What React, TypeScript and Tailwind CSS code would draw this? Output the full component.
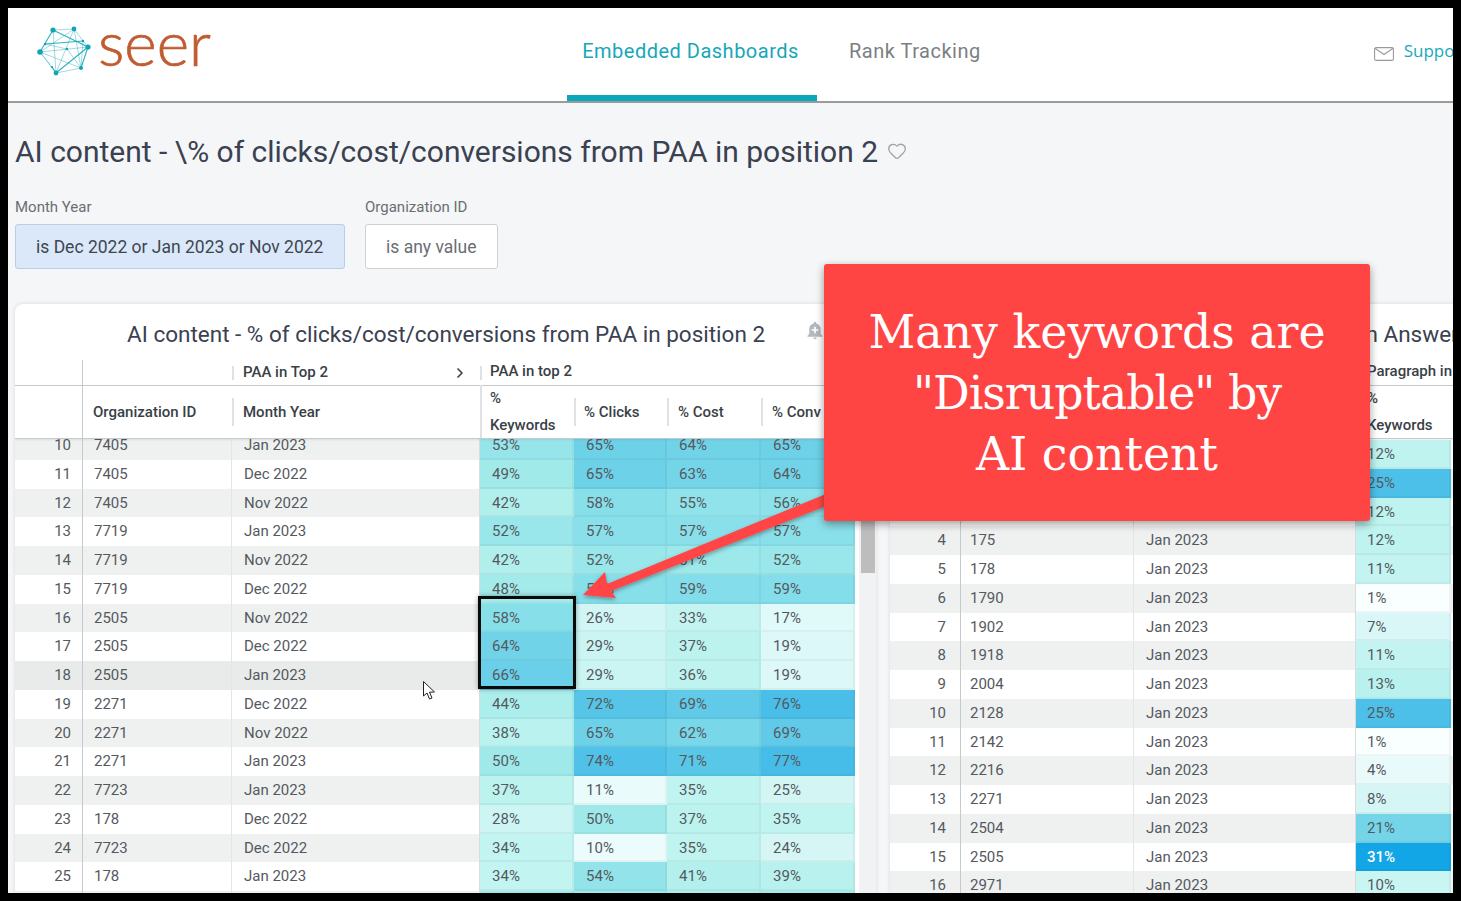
import React from 'react';
import { Heart, ChevronRight } from 'lucide-react';
import { MdAddAlert } from 'react-icons/md';

const stops: [number, number[]][] = [
  [0, [255, 255, 255]],
  [10, [236, 251, 252]],
  [25, [211, 246, 245]],
  [37, [188, 243, 239]],
  [50, [159, 233, 234]],
  [58, [135, 223, 234]],
  [65, [109, 209, 232]],
  [76, [73, 190, 232]],
  [93, [19, 166, 230]],
];

function heat(v: number) {
  for (let i = 1; i < stops.length; i++) {
    if (v <= stops[i][0]) {
      const [a, ca] = stops[i - 1];
      const [b, cb] = stops[i];
      const t = (v - a) / (b - a);
      const c = ca.map((x, j) => Math.round(x + (cb[j] - x) * t));
      return `rgb(${c[0]},${c[1]},${c[2]})`;
    }
  }
  return 'rgb(19,166,230)';
}

const leftRows: [number, string, string, number, number, number, number][] = [
  [10, '7405', 'Jan 2023', 53, 65, 64, 65],
  [11, '7405', 'Dec 2022', 49, 65, 63, 64],
  [12, '7405', 'Nov 2022', 42, 58, 55, 56],
  [13, '7719', 'Jan 2023', 52, 57, 57, 57],
  [14, '7719', 'Nov 2022', 42, 52, 51, 52],
  [15, '7719', 'Dec 2022', 48, 58, 59, 59],
  [16, '2505', 'Nov 2022', 58, 26, 33, 17],
  [17, '2505', 'Dec 2022', 64, 29, 37, 19],
  [18, '2505', 'Jan 2023', 66, 29, 36, 19],
  [19, '2271', 'Dec 2022', 44, 72, 69, 76],
  [20, '2271', 'Nov 2022', 38, 65, 62, 69],
  [21, '2271', 'Jan 2023', 50, 74, 71, 77],
  [22, '7723', 'Jan 2023', 37, 11, 35, 25],
  [23, '178', 'Dec 2022', 28, 50, 37, 35],
  [24, '7723', 'Dec 2022', 34, 10, 35, 24],
  [25, '178', 'Jan 2023', 34, 54, 41, 39],
  [26, '2504', 'Jan 2023', 50, 50, 45, 48],
];

const rightRows: [number, string, number][] = [
  [1, '12', 12],
  [2, '46', 25],
  [3, '152', 12],
  [4, '175', 12],
  [5, '178', 11],
  [6, '1790', 1],
  [7, '1902', 7],
  [8, '1918', 11],
  [9, '2004', 13],
  [10, '2128', 25],
  [11, '2142', 1],
  [12, '2216', 4],
  [13, '2271', 8],
  [14, '2504', 21],
  [15, '2505', 31],
  [16, '2971', 10],
];

function Logo() {
  const nodes: [number, number, number][] = [
    [53, 30, 2.6], [74, 29, 2.4], [88, 47, 2.6], [81, 68, 2], [56, 73, 2.4], [40, 52, 2.8],
    [45, 44, 1.2], [83, 41, 1.2], [52, 67, 1.1], [67, 49, 1.2],
  ];
  const lines = [
    [0, 1], [1, 2], [2, 3], [3, 4], [4, 5], [5, 0], [5, 1], [5, 2], [0, 2], [1, 4], [0, 4], [2, 4],
    [5, 3], [1, 3], [6, 7], [6, 9], [7, 3], [8, 4], [8, 5], [9, 3],
  ];
  return (
    <svg width="100" height="90" viewBox="0 0 100 90" className="shrink-0">
      {lines.map(([a, b], i) => (
        <line
          key={i}
          x1={nodes[a][0]}
          y1={nodes[a][1]}
          x2={nodes[b][0]}
          y2={nodes[b][1]}
          stroke="#1aa9b8"
          strokeWidth={i % 3 === 2 ? 1.1 : 0.7}
          opacity={i % 3 === 2 ? 0.9 : 0.6}
        />
      ))}
      {nodes.map(([x, y, r], i) => (
        <circle key={i} cx={x} cy={y} r={r} fill="#12a5b2" />
      ))}
    </svg>
  );
}

function Header() {
  return (
    <div className="flex h-[95px] shrink-0 bg-white border-b-2 border-[#9b9b9b] whitespace-nowrap">
      <div className="w-[559px] shrink-0 flex items-start h-[93px]">
        <div className="-ml-[8px] -mt-[8px]">
          <Logo />
        </div>
        <span className="font-['Lato'] font-light text-[62px] leading-none text-[#c05c31] [-webkit-text-stroke:0.7px_#c05c31] -ml-[2px] mt-[3px]">seer</span>
      </div>
      <div className="w-[250px] shrink-0 h-[93px] border-b-[6px] border-[#0ba8b9] flex justify-center pt-[31px] pr-[3px] text-[20px] leading-6 tracking-[0.5px] text-[#17a7b6]">
        Embedded Dashboards
      </div>
      <div className="pl-[32px] shrink-0 pt-[31px] text-[20px] leading-6 tracking-[0.5px] text-[#7b7f83]">Rank Tracking</div>
      <div className="ml-[393px] shrink-0 pt-[33px] flex items-start">
        <svg width="20" height="14" viewBox="0 0 20 14" className="mt-[6px] shrink-0" fill="none" stroke="#9a9a9a" strokeWidth="1.1">
          <rect x="0.6" y="0.6" width="18.8" height="12.8" rx="1.5" />
          <path d="M1 1.2 L10 7.5 L19 1.2" />
        </svg>
        <span className="ml-[10px] text-[17px] leading-5 text-[#19a9bb] font-['Open_Sans']">Support</span>
      </div>
    </div>
  );
}

function Filter({ label, value, active }: { label: string; value: string; active?: boolean }) {
  return (
    <div className="flex flex-col">
      <div className="text-[15px] leading-5 text-[#6a6e73] mb-[7px]">{label}</div>
      <div
        className={`h-[45px] flex items-center pt-[2px] pl-[20px] rounded-[3px] border text-[17.5px] ${
          active ? 'w-[330px] bg-[#dae8f9] border-[#b8cde8] text-[#3f4650]' : 'w-[133px] bg-white border-[#cdd1d5] text-[#6a6e73]'
        }`}
      >
        {value}
      </div>
    </div>
  );
}

function HeatCell({ v, w }: { v: number; w: string }) {
  return (
    <div className={`${w} h-full shrink-0 pl-[12px] pt-[2px] flex items-center border-r-2 border-b-2 border-black/[0.04]`} style={{ background: heat(v) }}>
      {v}%
    </div>
  );
}

function LeftTable() {
  return (
    <div className="w-[861px] shrink-0 bg-white rounded-t-lg shadow-[0_0_4px_rgba(0,0,0,0.12)] overflow-hidden flex flex-col">
      <div className="h-[56px] shrink-0 flex items-start pt-[17px] pl-[112px] text-[22.5px] leading-[26px] text-[#3a4150] whitespace-nowrap">
        AI content - % of clicks/cost/conversions from PAA in position 2
        <MdAddAlert className="ml-[40px] -mt-[1px] text-[#b4b7bb]" size={20} />
      </div>
      <div className="flex w-[840px] h-[26px] text-[15px] font-medium text-[#3a3f47] border-b border-[#c6c9cd]">
        <div className="w-[68px] border-r border-[#c6c9cd]" />
        <div className="w-[149px]" />
        <div className="w-[248px] flex items-center pl-[11px] relative">
          <span className="absolute left-0 top-[6px] h-[14px] w-[2px] bg-[#dfe1e4]" />
          PAA in Top 2
          <ChevronRight className="ml-auto mr-[12px]" size={16} strokeWidth={2.5} />
        </div>
        <div className="flex-1 flex items-center pl-[10px] relative -mt-[2px]">
          <span className="absolute left-0 top-[8px] h-[14px] w-[2px] bg-[#dfe1e4]" />
          PAA in top 2
        </div>
      </div>
      <div className="flex w-[840px] h-[53px] text-[15px] font-medium text-[#3a3f47] border-b border-[#c6c9cd] shadow-[0_1px_2px_rgba(0,0,0,0.08)] relative">
        <div className="w-[68px] border-r border-[#c6c9cd]" />
        <div className="w-[149px] pl-[10px] flex items-center">Organization ID</div>
        <div className="w-[248px] pl-[9px] flex items-center border-l-2 border-[#dfe1e4] my-[12px]">Month Year</div>
        <div className="w-[94px] pl-[8px] flex flex-col leading-[27px] -mt-[1px] border-l-2 border-[#dfe1e4]">
          <span>%</span>
          <span>Keywords</span>
        </div>
        <div className="w-[93px] pl-[8px] flex items-center border-l-2 border-[#dfe1e4] my-[12px]">% Clicks</div>
        <div className="w-[94px] pl-[9px] flex items-center border-l-2 border-[#dfe1e4] my-[12px]">% Cost</div>
        <div className="w-[94px] pl-[9px] flex items-center border-l-2 border-[#dfe1e4] my-[12px]">% Conv</div>
      </div>
      <div className="flex-1 overflow-hidden flex">
        <div className="w-[840px] shrink-0 -mt-[8px] text-[15px] text-[#55595e]">
          {leftRows.map((r) => (
            <div
              key={r[0]}
              className={`flex h-[28.75px] items-center ${r[0] === 18 ? 'bg-[#e9ebeb]' : r[0] % 2 === 0 ? 'bg-[#eff1f1]' : 'bg-white'}`}
            >
              <div className="w-[68px] h-full flex items-center justify-end pr-[11px] border-r border-[#c6c9cd]">{r[0]}</div>
              <div className="w-[149px] h-full flex items-center pl-[11px] border-r border-[#e3e5e7]">{r[1]}</div>
              <div className="w-[248px] h-full flex items-center pl-[12px] border-r border-[#d9dbdd]">{r[2]}</div>
              <HeatCell v={r[3]} w="w-[94px]" />
              <HeatCell v={r[4]} w="w-[93px]" />
              <HeatCell v={r[5]} w="w-[94px]" />
              <HeatCell v={r[6]} w="w-[94px]" />
            </div>
          ))}
        </div>
        <div className="ml-[4px] w-[17px] bg-[#f1f2f3]">
          <div className="mt-[30px] h-[104px] w-[14px] mx-auto bg-[#bdbdbd]" />
        </div>
      </div>
    </div>
  );
}

function RightTable() {
  return (
    <div className="w-[700px] shrink-0 bg-white rounded-t-lg shadow-[0_0_4px_rgba(0,0,0,0.12)] overflow-hidden flex flex-col">
      <div className="h-[56px] shrink-0 pt-[17px] pl-[77px] text-[22.5px] leading-[26px] text-[#3a4150] whitespace-nowrap">
        AI content - % of clicks from Paragraph in Answer Box
      </div>
      <div className="flex h-[26px] text-[15px] font-medium text-[#3a3f47] border-b border-[#c6c9cd]">
        <div className="ml-[477px] flex items-center -mt-[2px] whitespace-nowrap">Paragraph in Answer Box</div>
      </div>
      <div className="flex h-[53px] text-[15px] font-medium text-[#3a3f47] border-b border-[#c6c9cd] shadow-[0_1px_2px_rgba(0,0,0,0.08)]">
        <div className="w-[71px]" />
        <div className="w-[173px] pl-[10px] flex items-center">Organization ID</div>
        <div className="w-[222px] pl-[11px] flex items-center">Month Year</div>
        <div className="w-[94px] pl-[11px] flex flex-col leading-[27px] -mt-[1px]">
          <span>%</span>
          <span>Keywords</span>
        </div>
      </div>
      <div className="flex-1 overflow-hidden pt-[1px] text-[15px] text-[#55595e]">
        {rightRows.map((r) => (
          <div key={r[0]} className={`flex h-[28.75px] items-center ${r[0] % 2 === 0 ? 'bg-[#eff1f1]' : 'bg-white'}`}>
            <div className="w-[71px] h-full flex items-center justify-end pr-[14px] border-r border-[#c6c9cd]">{r[0]}</div>
            <div className="w-[173px] h-full flex items-center pl-[9px] border-r border-[#e3e5e7]">{r[1]}</div>
            <div className="w-[222px] h-full flex items-center pl-[12px] border-r border-[#d9dbdd]">Jan 2023</div>
            <div
              className={`w-[95px] h-full flex items-center pl-[11px] pt-[2px] border-r-2 border-b-2 border-black/[0.04] ${r[2] > 30 ? 'text-white font-medium' : ''}`}
              style={{ background: heat(r[2] * 3) }}
            >
              {r[2]}%
            </div>
          </div>
        ))}
      </div>
    </div>
  );
}

function Overlays() {
  return (
    <>
      <div className="absolute left-[478px] top-[596px] w-[98px] h-[93px] border-[3px] border-[#0a0a0a] shadow-[0_0_5px_rgba(0,0,0,0.35)]" />
      <svg className="absolute left-[570px] top-[480px]" width="270" height="135" viewBox="570 480 270 135">
        <defs>
          <filter id="arrowShadow" x="-10%" y="-10%" width="120%" height="130%">
            <feDropShadow dx="0" dy="2" stdDeviation="2" floodColor="#000" floodOpacity="0.35" />
          </filter>
        </defs>
        <polygon
          points="583,595 605,572 607,584 826,494 826,506 611,591 616,598"
          fill="#ff4444"
          filter="url(#arrowShadow)"
        />
      </svg>
      <svg className="absolute left-[423px] top-[681px]" width="13" height="20" viewBox="0 0 13 20">
        <path d="M0.5 0.5 L0.5 15 L4 12 L6.5 18 L9 17 L6.5 11.2 L11.5 11 Z" fill="#fff" stroke="#222" strokeWidth="1" strokeLinejoin="round" />
      </svg>
      <div className="absolute left-[824px] top-[264px] w-[546px] h-[257px] pt-[2px] bg-[#ff4444] rounded-[3px] shadow-[0_3px_8px_rgba(0,0,0,0.4)] flex flex-col items-center justify-center font-['DejaVu_Serif'] text-white text-[45.8px] leading-[61px]">
        <div>Many keywords are</div>
        <div className="tracking-[-1px]">"Disruptable" by</div>
        <div>AI content</div>
      </div>
    </>
  );
}

export default function App() {
  return (
    <div className="relative w-[1461px] h-[901px] bg-black p-2 overflow-hidden font-['Roboto',sans-serif]">
      <div className="w-full h-full bg-[#f5f6f8] overflow-hidden flex flex-col">
        <Header />
        <div className="pl-[7px] flex-1 flex flex-col min-h-0">
          <div className="mt-[28px] h-[42px] flex items-center text-[30px] leading-[42px] text-[#3a4150] whitespace-nowrap">
            AI content - \% of clicks/cost/conversions from PAA in position 2
            <Heart className="ml-[9px] -mt-[3px] text-[#9ea2a6]" size={20} strokeWidth={1.5} />
          </div>
          <div className="mt-[24px] flex gap-[20px]">
            <Filter label="Month Year" value="is Dec 2022 or Jan 2023 or Nov 2022" active />
            <Filter label="Organization ID" value="is any value" />
          </div>
          <div className="mt-[35px] flex gap-[14px] flex-1 min-h-0">
            <LeftTable />
            <RightTable />
          </div>
        </div>
      </div>
      <Overlays />
    </div>
  );
}
